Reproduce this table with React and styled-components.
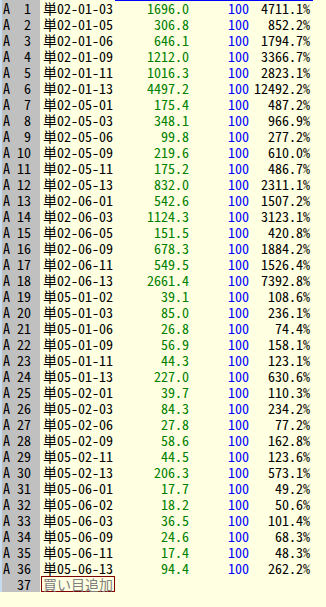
import React from "react";
import styled, { createGlobalStyle } from "styled-components";

const rows = [
  ["02-01-03", "1696.0", "4711.1%"],
  ["02-01-05", "306.8", "852.2%"],
  ["02-01-06", "646.1", "1794.7%"],
  ["02-01-09", "1212.0", "3366.7%"],
  ["02-01-11", "1016.3", "2823.1%"],
  ["02-01-13", "4497.2", "12492.2%"],
  ["02-05-01", "175.4", "487.2%"],
  ["02-05-03", "348.1", "966.9%"],
  ["02-05-06", "99.8", "277.2%"],
  ["02-05-09", "219.6", "610.0%"],
  ["02-05-11", "175.2", "486.7%"],
  ["02-05-13", "832.0", "2311.1%"],
  ["02-06-01", "542.6", "1507.2%"],
  ["02-06-03", "1124.3", "3123.1%"],
  ["02-06-05", "151.5", "420.8%"],
  ["02-06-09", "678.3", "1884.2%"],
  ["02-06-11", "549.5", "1526.4%"],
  ["02-06-13", "2661.4", "7392.8%"],
  ["05-01-02", "39.1", "108.6%"],
  ["05-01-03", "85.0", "236.1%"],
  ["05-01-06", "26.8", "74.4%"],
  ["05-01-09", "56.9", "158.1%"],
  ["05-01-11", "44.3", "123.1%"],
  ["05-01-13", "227.0", "630.6%"],
  ["05-02-01", "39.7", "110.3%"],
  ["05-02-03", "84.3", "234.2%"],
  ["05-02-06", "27.8", "77.2%"],
  ["05-02-09", "58.6", "162.8%"],
  ["05-02-11", "44.5", "123.6%"],
  ["05-02-13", "206.3", "573.1%"],
  ["05-06-01", "17.7", "49.2%"],
  ["05-06-02", "18.2", "50.6%"],
  ["05-06-03", "36.5", "101.4%"],
  ["05-06-09", "24.6", "68.3%"],
  ["05-06-11", "17.4", "48.3%"],
  ["05-06-13", "94.4", "262.2%"],
];

export default function App() {
  return (
    <>
      <GlobalStyle />
      <Sheet>
        <TopRule />
        {rows.map(([name, odds, pct], i) => (
          <Row key={name}>
            <Head>
              <Mark>A</Mark>
              <Num>{i + 1}</Num>
            </Head>
            <Name>単{name}</Name>
            <Odds>{odds}</Odds>
            <Bet>100</Bet>
            <Pct>{pct}</Pct>
          </Row>
        ))}
        <Row>
          <Head>
            <Mark />
            <Num>{rows.length + 1}</Num>
          </Head>
          <AddCell>
            <AddBox>買い目追加</AddBox>
          </AddCell>
        </Row>
      </Sheet>
    </>
  );
}

const GlobalStyle = createGlobalStyle`
  html, body {
    margin: 0;
    padding: 0;
    background: #ffffe1;
  }
  body {
    width: 326px;
    height: 607px;
    overflow: hidden;
    font-family: "Noto Sans Mono CJK JP", "Noto Sans CJK JP", "Liberation Mono", monospace;
    font-size: 14px;
    color: #000000;
  }
`;

const Sheet = styled.div`
  position: relative;
  width: 326px;
  background: #ffffe1;
`;

const TopRule = styled.div`
  position: absolute;
  top: 0;
  left: 115px;
  width: 198px;
  height: 1px;
  background: #0000ff;
`;

const Row = styled.div`
  display: grid;
  grid-template-columns: 40px 75px 75px 60px 63px 1fr;
  height: 16px;
  line-height: 16px;
  white-space: nowrap;
`;

const Head = styled.div`
  display: flex;
  justify-content: space-between;
  background: #c0c0c0;
  border-left: 2px solid #c8dcf0;
  padding: 0 9px 0 1px;
`;

const Mark = styled.span``;

const Num = styled.span``;

const Name = styled.div`
  padding-left: 3px;
`;

const Odds = styled.div`
  text-align: right;
  color: #008000;
  padding-right: 1px;
`;

const Bet = styled.div`
  text-align: right;
  color: #0000ff;
  padding-right: 1px;
`;

const Pct = styled.div`
  text-align: right;
  padding-right: 3px;
`;

const AddCell = styled.div`
  padding-left: 1px;
  grid-column: 2 / 3;
`;

const AddBox = styled.div`
  box-sizing: border-box;
  height: 16px;
  line-height: 14px;
  border: 1px solid #800000;
  color: #808080;
  padding-left: 1px;
`;
